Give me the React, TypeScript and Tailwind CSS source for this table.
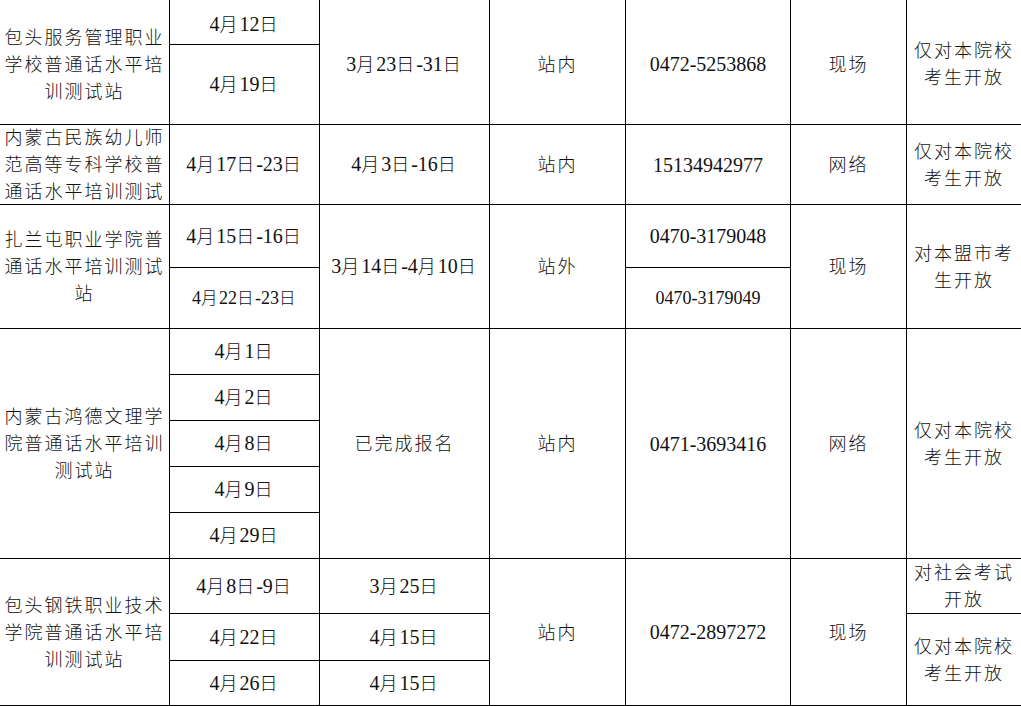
import React from "react";

type CellProps = { className: string; lines: string[]; small?: boolean };

function renderLine(l: string, small?: boolean) {
  const parts = l.split(/([\u4e00-\u9fff]+)/).filter((p) => p.length > 0);
  return parts.map((p, i) =>
    /[\u4e00-\u9fff]/.test(p) ? (
      <span
        key={i}
        className={
          small
            ? "text-[16.5px] tracking-[1.5px] font-light"
            : "text-[18px] tracking-[2px] font-light"
        }
      >
        {p}
      </span>
    ) : (
      <span key={i}>{p}</span>
    )
  );
}

function Cell({ className, lines, small }: CellProps) {
  return (
    <div
      className={
        "bg-white flex flex-col items-center justify-center text-center whitespace-nowrap text-[#111] " +
        (small ? "text-[18px] leading-[24px] " : "text-[20px] leading-[26px] ") +
        className
      }
    >
      {lines.map((l, i) => (
        <div key={i}>{renderLine(l, small)}</div>
      ))}
    </div>
  );
}

const K1 = ["仅对本院校", "考生开放"];

export default function App() {
  return (
    <div className="w-[1021px] h-[706px] bg-white overflow-hidden font-['Liberation_Serif','Noto_Sans_CJK_SC',serif]">
      <div className="grid w-[1021px] h-[706px] gap-px bg-black pb-px grid-cols-[169px_149px_169px_135px_164px_115px_114px] grid-rows-[44px_79px_79px_62px_60px_45px_45px_45px_45px_45px_54px_46px_44px]">
        {/* Column 1 */}
        <Cell className="col-start-1 row-start-1 row-span-2 pt-[4px]" lines={["包头服务管理职业", "学校普通话水平培", "训测试站"]} />
        <Cell className="col-start-1 row-start-3" lines={["内蒙古民族幼儿师", "范高等专科学校普", "通话水平培训测试"]} />
        <Cell className="col-start-1 row-start-4 row-span-2" lines={["扎兰屯职业学院普", "通话水平培训测试", "站"]} />
        <Cell className="col-start-1 row-start-6 row-span-5" lines={["内蒙古鸿德文理学", "院普通话水平培训", "测试站"]} />
        <Cell className="col-start-1 row-start-11 row-span-3" lines={["包头钢铁职业技术", "学院普通话水平培", "训测试站"]} />

        {/* Column 2 */}
        <Cell className="col-start-2 row-start-1 pt-[4px]" lines={["4月12日"]} />
        <Cell className="col-start-2 row-start-2" lines={["4月19日"]} />
        <Cell className="col-start-2 row-start-3" lines={["4月17日-23日"]} />
        <Cell className="col-start-2 row-start-4" lines={["4月15日-16日"]} />
        <Cell className="col-start-2 row-start-5" small lines={["4月22日-23日"]} />
        <Cell className="col-start-2 row-start-6" lines={["4月1日"]} />
        <Cell className="col-start-2 row-start-7" lines={["4月2日"]} />
        <Cell className="col-start-2 row-start-8" lines={["4月8日"]} />
        <Cell className="col-start-2 row-start-9" lines={["4月9日"]} />
        <Cell className="col-start-2 row-start-10" lines={["4月29日"]} />
        <Cell className="col-start-2 row-start-11" lines={["4月8日-9日"]} />
        <Cell className="col-start-2 row-start-12" lines={["4月22日"]} />
        <Cell className="col-start-2 row-start-13" lines={["4月26日"]} />

        {/* Column 3 */}
        <Cell className="col-start-3 row-start-1 row-span-2 pt-[4px]" lines={["3月23日-31日"]} />
        <Cell className="col-start-3 row-start-3" lines={["4月3日-16日"]} />
        <Cell className="col-start-3 row-start-4 row-span-2" lines={["3月14日-4月10日"]} />
        <Cell className="col-start-3 row-start-6 row-span-5" lines={["已完成报名"]} />
        <Cell className="col-start-3 row-start-11" lines={["3月25日"]} />
        <Cell className="col-start-3 row-start-12" lines={["4月15日"]} />
        <Cell className="col-start-3 row-start-13" lines={["4月15日"]} />

        {/* Column 4 */}
        <Cell className="col-start-4 row-start-1 row-span-2 pt-[4px]" lines={["站内"]} />
        <Cell className="col-start-4 row-start-3" lines={["站内"]} />
        <Cell className="col-start-4 row-start-4 row-span-2" lines={["站外"]} />
        <Cell className="col-start-4 row-start-6 row-span-5" lines={["站内"]} />
        <Cell className="col-start-4 row-start-11 row-span-3" lines={["站内"]} />

        {/* Column 5 */}
        <Cell className="col-start-5 row-start-1 row-span-2 pt-[4px]" lines={["0472-5253868"]} />
        <Cell className="col-start-5 row-start-3" lines={["15134942977"]} />
        <Cell className="col-start-5 row-start-4" lines={["0470-3179048"]} />
        <Cell className="col-start-5 row-start-5" small lines={["0470-3179049"]} />
        <Cell className="col-start-5 row-start-6 row-span-5" lines={["0471-3693416"]} />
        <Cell className="col-start-5 row-start-11 row-span-3" lines={["0472-2897272"]} />

        {/* Column 6 */}
        <Cell className="col-start-6 row-start-1 row-span-2 pt-[4px]" lines={["现场"]} />
        <Cell className="col-start-6 row-start-3" lines={["网络"]} />
        <Cell className="col-start-6 row-start-4 row-span-2" lines={["现场"]} />
        <Cell className="col-start-6 row-start-6 row-span-5" lines={["网络"]} />
        <Cell className="col-start-6 row-start-11 row-span-3" lines={["现场"]} />

        {/* Column 7 */}
        <Cell className="col-start-7 row-start-1 row-span-2 pt-[4px]" lines={K1} />
        <Cell className="col-start-7 row-start-3" lines={K1} />
        <Cell className="col-start-7 row-start-4 row-span-2" lines={["对本盟市考", "生开放"]} />
        <Cell className="col-start-7 row-start-6 row-span-5" lines={K1} />
        <Cell className="col-start-7 row-start-11" lines={["对社会考试", "开放"]} />
        <Cell className="col-start-7 row-start-12 row-span-2" lines={K1} />
      </div>
    </div>
  );
}
